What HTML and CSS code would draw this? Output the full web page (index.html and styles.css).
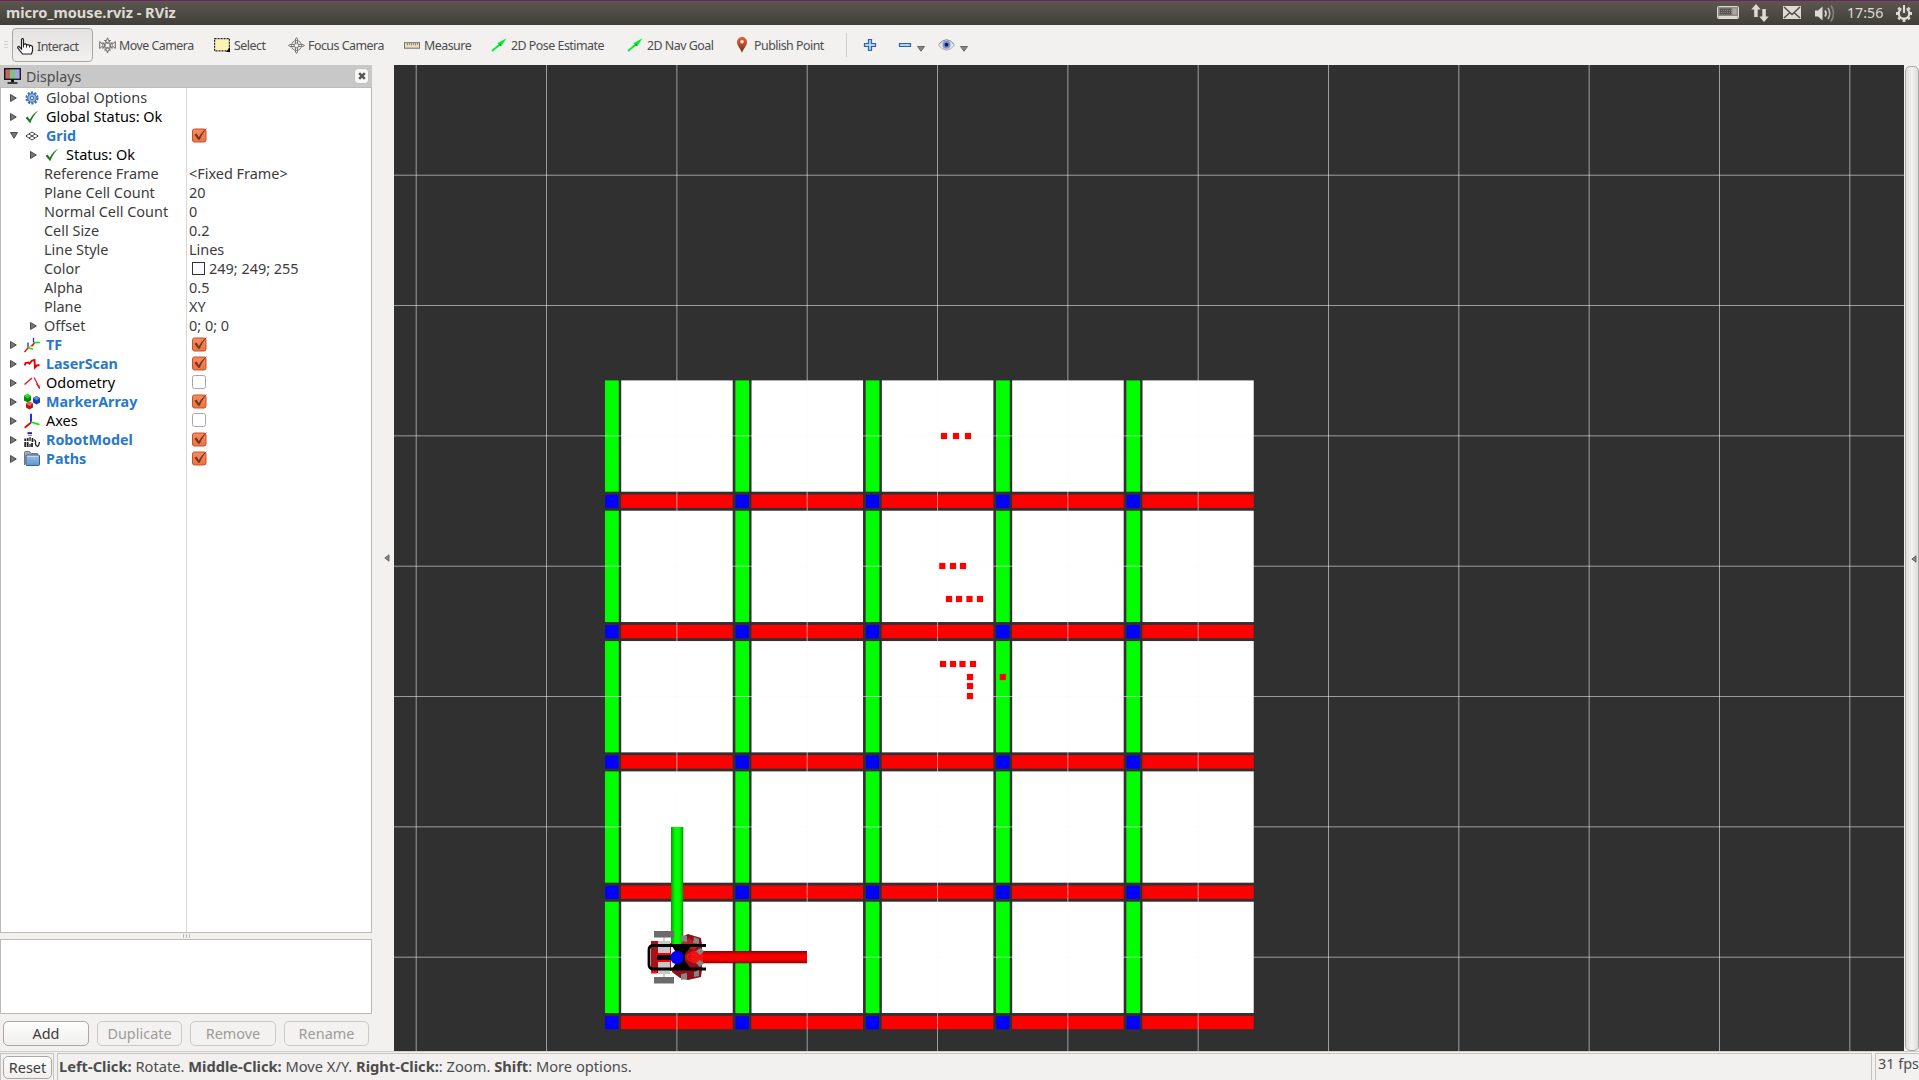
FILE: index.html
```html
<!DOCTYPE html>
<html lang="en">
<head>
<meta charset="utf-8">
<title>micro_mouse.rviz - RViz</title>
<link rel="stylesheet" href="styles.css">
</head>
<body>
<svg class="defs" width="0" height="0">
  <defs>
    <linearGradient id="check-fill" x1="0" y1="0" x2="0" y2="1"><stop offset="0" stop-color="#f88a5e"/><stop offset="1" stop-color="#ee7440"/></linearGradient>
    <linearGradient id="folder-fill" x1="0" y1="0" x2="0" y2="1"><stop offset="0" stop-color="#9dbfe4"/><stop offset="1" stop-color="#5f93cc"/></linearGradient>
    <linearGradient id="pin-fill" x1="0" y1="0" x2="0" y2="1"><stop offset="0" stop-color="#ee5a35"/><stop offset=".5" stop-color="#b54a2c"/><stop offset="1" stop-color="#4a2b18"/></linearGradient>
    <linearGradient id="green-axis"><stop offset="0" stop-color="#089008"/><stop offset=".15" stop-color="#00cc00"/><stop offset=".35" stop-color="#0f0"/><stop offset=".65" stop-color="#0f0"/><stop offset=".85" stop-color="#00cc00"/><stop offset="1" stop-color="#089008"/></linearGradient>
    <linearGradient id="red-axis" x1="0" y1="0" x2="0" y2="1"><stop offset="0" stop-color="#8a0000"/><stop offset=".15" stop-color="#c80000"/><stop offset=".35" stop-color="#f80000"/><stop offset=".65" stop-color="#f80000"/><stop offset=".85" stop-color="#c80000"/><stop offset="1" stop-color="#8a0000"/></linearGradient>
    <symbol id="arrow-right" viewBox="0 0 7 8"><path d="M.5.5 6.300 4 .5 7.500z" fill="#777" stroke="#4c4c4c"/></symbol>
    <symbol id="arrow-down" viewBox="0 0 8 7"><path d="M.5.5h7L4 6.300z" fill="#777" stroke="#4c4c4c"/></symbol>
    <symbol id="menu-arrow" viewBox="0 0 8 6"><path d="M.5.5h7L4 5.200z" fill="#888" stroke="#666"/></symbol>
    <symbol id="status-ok" viewBox="0 0 14 14"><path d="M.6 8 2.500 6.400 4.800 9.600C7 5.500 9.500 2.700 13.400.6 9.800 4 7.200 8 5.200 13.200z" fill="#1f7a1f"/></symbol>
    <symbol id="checked" viewBox="0 0 17 16"><rect x="1.500" y="2" width="13.500" height="13" rx="2" fill="url(#check-fill)" stroke="#bd5430"/><path d="M3.500 7.700 5.500 6.500l2.300 3.800C10 6.500 12.500 3 16.500.8 13 4.500 10.500 8.500 8.800 12.800H7.200z" fill="#6b3825"/></symbol>
    <symbol id="unchecked" viewBox="0 0 17 16"><rect x="1.500" y="1.500" width="13" height="13" rx="2" fill="#fff" stroke="#a8a6a4"/></symbol>
    <symbol id="green-arrow" viewBox="0 0 16 14"><path d="m1.500 12.500 8-6.500" stroke="#00ef30" stroke-width="1.900" stroke-linecap="round"/><path d="M6.300 5.200 15.500.3 10.200 8.300z" fill="#00ef30"/><path d="m8 7 2-1v2z" fill="#087a20"/></symbol>
  </defs>
</svg>

<header class="titlebar">
  <span class="window-title">micro_mouse.rviz - RViz</span>
  <svg class="tray" width="206" height="24" viewBox="1713 1 206 24" fill="none">
    <rect x="1717.500" y="6.500" width="21" height="12" rx="1" fill="#8e8b83" stroke="#dedad2"/>
    <rect x="1719.500" y="8.500" width="12" height="6" fill="#56544e"/><rect x="1732.500" y="8.500" width="4" height="6" fill="#a8a69d"/>
    <path d="M1719 10.500h17M1719 12.500h17" stroke="#a8a69d" stroke-width=".7" stroke-dasharray="1 1"/><path d="M1718.500 17h19" stroke="#dedad2" stroke-width="2"/>
    <path d="m1756 4 4.700 5.500h-3V17h-3.500V9.500h-3z" fill="#dfdbd2"/><path d="M1764 22l-4.700-5.500h3V9h3.500v7.500h3z" fill="#dfdbd2"/>
    <rect x="1783" y="6" width="18" height="13" fill="#dfdbd2"/><path d="m1784 7 8 7.500 8-7.500M1784 18l5.500-5M1800 18l-5.500-5" stroke="#4b4a44" stroke-width="1.400"/>
    <path d="M1815 10.500h3l4.500-4v14l-4.500-4h-3z" fill="#dfdbd2"/>
    <path d="M1825 10.500q2 3 0 6" stroke="#dfdbd2" stroke-width="1.700"/><path d="M1828 8q3.600 5.500 0 11" stroke="#bbb8af" stroke-width="1.700"/><path d="M1831 5.500q5 8 0 16" stroke="#85827a" stroke-width="1.700"/>
    <circle cx="1904" cy="13.500" r="5.200" stroke="#dfdbd2" stroke-width="2.200"/>
    <path d="M1904 19v3M1896 13.500h2M1910 13.500h2M1898.300 7.800l1.600 1.600M1909.700 7.800l-1.600 1.600M1898.300 19.200l1.600-1.600M1909.700 19.200l-1.600-1.600" stroke="#dfdbd2" stroke-width="2.800"/>
    <path d="M1904 4v9" stroke="#4b4a44" stroke-width="5"/><path d="M1904 5v8" stroke="#dfdbd2" stroke-width="2.200"/>
  </svg>
  <span class="clock">17:56</span>
</header>

<nav class="toolbar">
  <svg class="grip" width="4" height="10"><path d="M0 1.500h4M0 4.500h4M0 7.500h4" stroke="#d0cfcd"/></svg>
  <button class="tool interact">
    <svg width="17" height="17" viewBox="0 0 17 17"><path d="M4.500 11V2q0-1.500 1-1.500t1 1.500v4.500q2.500-1.500 3 .5 2-1 3 .5 2.500-.5 3 1.500v4l-1 3h-9L.8 10Q.5 8 2 8.500z" fill="#fff" stroke="#222" stroke-width="1.200"/><path d="M6.500 6v3.500M9.500 7v2.500M12.500 7.500v2" stroke="#222" fill="none"/></svg>
    <span>Interact</span>
  </button>
  <button class="tool move">
    <svg width="17" height="17" viewBox="0 0 17 17" fill="none" stroke="#666" stroke-width="1"><path d="m8.500 6-3-2.500h2L8.500.8l1 2.700h2zM8.500 10.500 5.500 13h2l1 3 1-3h2zM6 8.500 4 5.500v2L.7 4.500v7L4 8.700v2.800zM11 8.500l2-3v2l3.300-3v7L13 8.700v2.800z"/><rect x="6" y="6" width="5" height="5"/></svg>
    <span>Move Camera</span>
  </button>
  <button class="tool select">
    <svg width="16" height="14" viewBox="0 0 16 14"><rect x=".6" y=".6" width="14.800" height="12.300" fill="#fbf3b6" stroke="#222" stroke-width="1.200" stroke-dasharray="2 1"/><path d="M16 9v5h-4z"/></svg>
    <span>Select</span>
  </button>
  <button class="tool focus">
    <svg width="17" height="17" viewBox="0 0 17 17" fill="none" stroke="#777"><circle cx="8.500" cy="8.500" r="5"/><circle cx="8.500" cy="8.500" r="2.300"/><path d="M7.500 6V2L8.500.5l1 1.500v4M7.500 11v4l1 1.500 1-1.500v-4M6 7.500H2l-1.500 1L2 9.500h4M11 7.500h4l1.500 1-1.500 1h-4"/></svg>
    <span>Focus Camera</span>
  </button>
  <button class="tool measure">
    <svg width="16" height="7" viewBox="0 0 16 7"><rect x=".5" y=".7" width="15" height="5.500" fill="#e9deb4" stroke="#77736a"/><path d="M3.500 1v2.500M5.500 1v2M7.500 1v2.500M9.500 1v2M11.500 1v2.500M13.500 1v2" stroke="#777" stroke-width=".8"/></svg>
    <span>Measure</span>
  </button>
  <button class="tool pose"><svg width="16" height="14"><use href="#green-arrow"/></svg><span>2D Pose Estimate</span></button>
  <button class="tool nav"><svg width="16" height="14"><use href="#green-arrow"/></svg><span>2D Nav Goal</span></button>
  <button class="tool publish">
    <svg width="14" height="16" viewBox="0 0 14 16"><path d="M7 15.800C5.500 11.500 2 9 2 5a5 5 0 0 1 10 0c0 4-3.500 6.500-5 10.800z" fill="url(#pin-fill)"/><circle cx="7" cy="4.800" r="1.800" fill="#fbe6df"/></svg>
    <span>Publish Point</span>
  </button>
  <span class="separator"></span>
  <svg class="plus" width="14" height="14" viewBox="0 0 14 14"><path d="M5.500 1.500h3v4h4v3h-4v4h-3v-4h-4v-3h4z" fill="#b2d0f0" stroke="#2e64a3" stroke-width="1.200"/></svg>
  <svg class="minus" width="14" height="6" viewBox="0 0 14 6"><path d="M1.500 1.500h11v3h-11z" fill="#b2d0f0" stroke="#2e64a3" stroke-width="1.200"/></svg>
  <svg class="drop" width="8" height="6"><use href="#menu-arrow"/></svg>
  <svg class="eye" width="17" height="12" viewBox="0 0 17 12"><path d="M.5 6Q4 1 8.500 1t8 5Q13 11 8.500 11T.5 6z" fill="#e8e8e6" stroke="#aaa"/><circle cx="8.500" cy="5.700" r="4" fill="#7b93d8"/><circle cx="8.500" cy="5.700" r="1.900" fill="#111b50"/><path d="M1 5Q4.500.7 8.500.7T16 5" fill="none" stroke="#999"/></svg>
  <svg class="drop" width="8" height="6"><use href="#menu-arrow"/></svg>
</nav>

<main class="workspace">
  <aside class="displays">
    <div class="dock-title">
      <svg width="17" height="17" viewBox="0 0 17 17"><path d="M1 1h5v10H1z" fill="#c46464"/><path d="M6 1h5v10H6z" fill="#7cc57c"/><path d="M11 1h5v10h-5z" fill="#a6a1ee"/><rect x=".7" y=".7" width="15.600" height="10.600" fill="none" stroke="#111" stroke-width="1.300"/><path d="M7 11.500h3V14H7zM3.500 14.200h10v1.500h-10z" fill="#111"/></svg>
      <span class="dock-name">Displays</span>
      <button class="close"><svg width="8" height="8"><path d="m1.200 1.200 5.600 5.600M6.800 1.200 1.200 6.800" stroke="#555" stroke-width="2.400"/></svg></button>
    </div>
    <div class="tree">
      <div class="row"><svg class="exp" width="7" height="8"><use href="#arrow-right"/></svg><span class="icon"><svg width="14" height="14" viewBox="0 0 14 14" fill="none"><circle cx="7" cy="7" r="5.600" stroke="#3f6ea9" stroke-width="2" stroke-dasharray="2.200 1.320"/><circle cx="7" cy="7" r="4.400" fill="#8fb3e2" stroke="#3f6eb0"/><circle cx="7" cy="7" r="1.700" fill="#dce8f8" stroke="#3f6eb0"/></svg></span><span class="name">Global Options</span></div>
      <div class="row status"><svg class="exp" width="7" height="8"><use href="#arrow-right"/></svg><span class="icon"><svg width="14" height="14"><use href="#status-ok"/></svg></span><span class="name">Global Status: Ok</span></div>
      <div class="row enabled"><svg class="exp" width="8" height="7"><use href="#arrow-down"/></svg><span class="icon"><svg width="14" height="10" viewBox="0 0 14 10" fill="none" stroke="#444"><path d="M.8 5 7 1l6.200 4L7 9zM4 3l6 4M10 3 4 7"/></svg></span><span class="name">Grid</span><svg class="box" width="17" height="16"><use href="#checked"/></svg></div>
      <div class="row status child"><svg class="exp" width="7" height="8"><use href="#arrow-right"/></svg><span class="icon"><svg width="14" height="14"><use href="#status-ok"/></svg></span><span class="name">Status: Ok</span></div>
      <div class="row prop"><span class="name">Reference Frame</span><span class="value">&lt;Fixed Frame&gt;</span></div>
      <div class="row prop"><span class="name">Plane Cell Count</span><span class="value">20</span></div>
      <div class="row prop"><span class="name">Normal Cell Count</span><span class="value">0</span></div>
      <div class="row prop"><span class="name">Cell Size</span><span class="value">0.2</span></div>
      <div class="row prop"><span class="name">Line Style</span><span class="value">Lines</span></div>
      <div class="row prop"><span class="name">Color</span><span class="value"><i class="swatch"></i>249; 249; 255</span></div>
      <div class="row prop"><span class="name">Alpha</span><span class="value">0.5</span></div>
      <div class="row prop"><span class="name">Plane</span><span class="value">XY</span></div>
      <div class="row prop offset"><svg class="exp" width="7" height="8"><use href="#arrow-right"/></svg><span class="name">Offset</span><span class="value">0; 0; 0</span></div>
      <div class="row enabled"><svg class="exp" width="7" height="8"><use href="#arrow-right"/></svg><span class="icon"><svg width="16" height="16" viewBox="0 0 16 16" fill="none" stroke-width="1.300"><path d="m4 11 6-5" stroke="#e6c63c"/><path d="M9.500 5.500V.8M4 10.500V5.500" stroke="#22f"/><path d="M10 5.500h6M4 11l5 1" stroke="#0e0"/><path d="m10.500 6-3 3.500M4 11l-3.500 4" stroke="#e00"/></svg></span><span class="name">TF</span><svg class="box" width="17" height="16"><use href="#checked"/></svg></div>
      <div class="row enabled"><svg class="exp" width="7" height="8"><use href="#arrow-right"/></svg><span class="icon"><svg width="16" height="12" viewBox="0 0 16 12"><path d="M.8 7.500 1.500 5 4.500 4.500 5.500 5.500 8 2.500l2.500-.5.500 7.500 2-2 2.500-.5" fill="none" stroke="#e80000" stroke-width="1.900"/></svg></span><span class="name">LaserScan</span><svg class="box" width="17" height="16"><use href="#checked"/></svg></div>
      <div class="row disabled"><svg class="exp" width="7" height="8"><use href="#arrow-right"/></svg><span class="icon"><svg width="16" height="14" viewBox="0 0 16 14" fill="none" stroke="#e02020"><path d="m.5 8.500 7.500-6.500" stroke-width="1.500"/><path d="m10 1.500 2.500 4.500 3 6.500" stroke-width="1.300"/><path d="m12 7.500 3.500 5-.3-3" fill="#e02020" stroke-width=".7"/></svg></span><span class="name">Odometry</span><svg class="box" width="17" height="16"><use href="#unchecked"/></svg></div>
      <div class="row enabled"><svg class="exp" width="7" height="8"><use href="#arrow-right"/></svg><span class="icon"><svg width="16" height="16" viewBox="0 0 16 16"><path d="M0 2 3.500 0 7 2v4.500l-3.500 2L0 6.500z" fill="#078a07"/><path d="M0 2 3.500 0 7 2 3.500 4.500z" fill="#1be51b"/><path d="m9 4 3.500-2L16 4v4.500l-3.500 2-3.500-2z" fill="#1638b0"/><path d="m9 4 3.500-2L16 4l-3.500 2.500z" fill="#5c82ee"/><path d="M2 9.500 5.500 7.500 9 9.500v4l-3.500 2-3.500-2z" fill="#b51c1c"/><path d="m2 9.500 3.500-2 3.500 2L5.500 12z" fill="#f06464"/></svg></span><span class="name">MarkerArray</span><svg class="box" width="17" height="16"><use href="#checked"/></svg></div>
      <div class="row disabled"><svg class="exp" width="7" height="8"><use href="#arrow-right"/></svg><span class="icon"><svg width="16" height="16" viewBox="0 0 16 16" stroke-width="1.800"><path d="M7 9.500V.8" stroke="#11e"/><path d="m7 9 8.500 2.700" stroke="#0e0"/><path d="M7 9.500.7 14.700" stroke="#e00"/></svg></span><span class="name">Axes</span><svg class="box" width="17" height="16"><use href="#unchecked"/></svg></div>
      <div class="row enabled"><svg class="exp" width="7" height="8"><use href="#arrow-right"/></svg><span class="icon"><svg width="16" height="16" viewBox="0 0 16 16" fill="none" stroke="#222"><path d="M3.500 1.200h4.500" stroke="#252580" stroke-width="2"/><path d="M4 3.500h4" stroke="#999"/><path d="M1.200 6.500v2.500M1.200 10V15M3.700 6v3M3.700 10v5M8.500 6v4M8 11v4" stroke-width="1.800"/><path d="M6 5v4M6 12v3M10.300 7.500q1.700 1 1.200 3.500t2 3.500q1.500-1 2-4.500" stroke-width="1.300"/></svg></span><span class="name">RobotModel</span><svg class="box" width="17" height="16"><use href="#checked"/></svg></div>
      <div class="row enabled"><svg class="exp" width="7" height="8"><use href="#arrow-right"/></svg><span class="icon"><svg width="16" height="15" viewBox="0 0 16 15"><path d="M.5 14V1.500Q.5.500 1.500.500h4l1.500 2h6.500V5" fill="#aaa9a7" stroke="#777"/><rect x="2" y="4" width="13.500" height="10.500" rx="1" fill="url(#folder-fill)" stroke="#305f98"/><path d="M3.300 5.300h11" stroke="#c9def4"/></svg></span><span class="name">Paths</span><svg class="box" width="17" height="16"><use href="#checked"/></svg></div>
    </div>
    <div class="splitter"><i></i><i></i><i></i></div>
    <div class="description"></div>
    <div class="actions">
      <button class="btn">Add</button><button class="btn off">Duplicate</button><button class="btn off">Remove</button><button class="btn off">Rename</button>
    </div>
  </aside>
  <div class="collapse-left"><svg width="6" height="8"><path d="M5 .8v6.400L.8 4z" fill="#888" stroke="#555" stroke-width=".8"/></svg></div>
  <svg class="scene" width="1510" height="986" viewBox="394 65 1510 986">
    <g id="cells"></g>
    <g id="grid-lines" stroke="#f9f9ff" stroke-opacity=".55"></g>
    <g id="scan" fill="#f00"></g>
    <rect x="671" y="827" width="12.300" height="125" fill="url(#green-axis)"/>
    <rect x="690" y="951" width="117" height="12.300" fill="url(#red-axis)"/>
    <g class="robot">
      <path d="M664 937v40" stroke="#c9c3ac" stroke-width="1.500"/>
      <rect x="654" y="931" width="20" height="6.500" fill="#6b6b6b"/><rect x="654" y="977" width="20" height="6.500" fill="#6b6b6b"/>
      <path d="M682 937l6-3 13 4 1 7v9l-8 3 8 3v9l-1 8-13 3-8-2-8-6v-9h12v-18z" fill="#8d1118"/>
      <path d="M681 944l8-6 10 7-5 5z" fill="#b5222a"/>
      <rect x="651" y="941" width="7" height="32" fill="#a51218"/><rect x="651" y="970" width="6" height="3.500" fill="#e11"/>
      <rect x="658" y="941" width="12" height="33" fill="#c9c7c7"/><rect x="670" y="943" width="1.500" height="28" fill="#b01319"/>
      <path d="M671 946h5v23h-5z" fill="#fff"/>
      <path d="M657 953h14v3h-14zM657 959h14v3h-14z" fill="#f00"/><path d="M657 955h14v5h-14z" fill="#000"/>
      <path d="M672 946h19l-6 8v7l6 8h-19l5-8v-7z" fill="#000"/>
      <path d="M685 957q3-5 10-6.500h8v13h-8q-7-1.500-10-6.500z" fill="#f21212"/><path d="M690 953v9M686 957h4" fill="none" stroke="#a00" stroke-dasharray="1 1"/>
      <path d="M706 945.500h-54q-3 1-3 4v15.500q0 3 3 4h54" fill="none" stroke="#000" stroke-width="2.800"/>
      <path d="M681 935l6 1v6l-6-1zM694 937l5 2v5l-6-1zM681 974l6-1v6l-6 1zM694 972l5-2v6l-5 1zM696 951l4-3 4 3-4 4zM696 963l4-3 4 3-4 4z" fill="#858585"/>
      <circle cx="677" cy="957.500" r="6.700" fill="#00f"/>
    </g>
  </svg>
  <div class="right-dock"><svg width="6" height="8"><path d="M5 .8v6.400L.8 4z" fill="#888" stroke="#555" stroke-width=".8"/></svg></div>
</main>

<footer class="statusbar">
  <div class="cell reset-cell"><button class="btn reset">Reset</button></div>
  <div class="cell help"><span><b>Left-Click:</b> Rotate. <b>Middle-Click:</b> Move X/Y. <b>Right-Click:</b>: Zoom. <b>Shift</b>: More options.</span></div>
  <div class="cell fps"><span>31 fps</span></div>
</footer>
<script src="scene.js"></script>
</body>
</html>
```
FILE: styles.css
```css
* { box-sizing: border-box; }
body { margin: 0; width: 1919px; height: 1080px; overflow: hidden; display: flex; flex-direction: column; background: #f2f1f0; color: #3c3c3c; font: 14.45px/19px "Noto Sans", "Open Sans", sans-serif; }
button { font: inherit; color: inherit; letter-spacing: inherit; padding: 0; border: 0; background: none; }
svg { display: block; flex: none; }
span { white-space: nowrap; }
.defs { position: absolute; }

.titlebar { position: relative; height: 25px; flex: none; display: flex; align-items: center; justify-content: space-between; padding: 0 0 1px 6px; border-top: 1px solid #75215f; background: linear-gradient(#5b5850, #3f3e39); color: #dfdbd2; }
.window-title { font-weight: 700; font-size: 14.6px; }
.clock { position: absolute; left: 1847px; top: 2px; font-size: 14.2px; }

.toolbar { height: 40px; flex: none; display: flex; align-items: center; padding-left: 4px; font-size: 12.4px; letter-spacing: -.5px; color: #4c4c4c; }
.grip { margin-right: 4px; }
.tool { display: flex; align-items: center; gap: 4px; height: 34px; flex: none; }
.interact { width: 81px; gap: 3px; padding: 2px 0 0 4px; margin-right: 6px; border: 1px solid #a9a7a4; border-radius: 4px; background: linear-gradient(#e4e3e1, #f1f0ef); }
.move { width: 115px; gap: 3px; }
.select { width: 74px; }
.focus { width: 116px; gap: 3px; }
.measure { width: 87px; }
.pose { width: 136px; }
.nav { width: 108px; }
.publish { width: 111px; gap: 5px; }
.separator { width: 1px; height: 24px; background: #cfcdca; }
.plus { margin-left: 16px; }
.minus { margin-left: 21px; }
.drop { margin: 7px 0 0 5px; }
.eye { margin-left: 13px; }

.workspace { height: 986px; flex: none; display: flex; }
.displays { width: 372px; flex: none; display: flex; flex-direction: column; }
.dock-title { height: 22px; display: flex; align-items: center; padding: 0 4px 0 4px; background: #c8c8c8; color: #4c4c4c; }
.dock-name { margin-left: 5px; flex: 1; font-size: 14.2px; }
.close { width: 13px; height: 14px; display: grid; place-items: center; border-radius: 3px; background: #f7f7f6; box-shadow: 0 0 1px #888; }
.tree { height: 846px; border: 1px solid #bdbab5; background: linear-gradient(90deg, transparent 185px, #d9d7d5 185px, #d9d7d5 186px, transparent 186px) #fff; }
.row { height: 19px; display: grid; grid-template-columns: 22px 23px 141px 1fr; align-items: center; }
.exp { justify-self: start; margin-left: 9px; }
.icon { width: 16px; height: 16px; display: grid; place-items: center; margin-left: 1px; }
.name { grid-column: 3; }
.value, .box { grid-column: 4; }
.value { display: flex; align-items: center; padding-left: 2px; }
.box { margin-left: 4px; margin-top: -2px; }
.status, .disabled { color: #000; }
.enabled .name { color: #2878c8; font-weight: 700; font-size: 14.3px; }
.child { grid-template-columns: 42px 23px 121px 1fr; }
.child .exp { margin-left: 29px; }
.prop { grid-template-columns: 43px 143px 1fr; }
.prop .name { grid-column: 2; }
.prop .value { grid-column: 3; }
.offset .exp { margin-left: 29px; }
.swatch { width: 13px; height: 13px; margin: 0 4px 0 3px; border: 1px solid #333; background: #f9f9ff; }
.splitter { height: 6px; display: flex; gap: 2px; justify-content: center; align-items: center; }
.splitter i { width: 1px; height: 4px; background: #bbb; }
.description { height: 75px; border: 1px solid #bdbab5; background: #fff; }
.actions { display: grid; grid-template-columns: 86px 85px 86px 85px; gap: 8px; padding: 7px 3px 0; }
.btn { height: 25px; border: 1px solid #aaa7a3; border-radius: 5px; background: linear-gradient(#fdfdfd, #f0efee); color: #3c3c3c; }
.off { border-color: #cbc9c6; color: #9d9b99; background: #f3f2f1; }
.collapse-left { width: 22px; flex: none; display: flex; align-items: center; padding: 0 0 0 12px; }
.scene { background: #303030; }
.right-dock { flex: 1; margin: 1px 0 0 1px; border: 1px solid #aaa8a5; border-radius: 5px; background: linear-gradient(90deg, #dedddb, #f3f2f1 50%, #dddcda); display: flex; align-items: center; padding-left: 5px; overflow: hidden; }

.statusbar { flex: 1; display: flex; gap: 3px; padding: 1px 0 1px; border-top: 1px solid #cfcdca; color: #4c4c4c; }
.cell { border: 1px solid #c6c4c1; display: flex; align-items: center; }
.reset-cell { width: 54px; padding: 0 0 1px 2px; }
.reset { width: 49px; height: 23px; }
.help { width: 1815px; padding: 0 0 2px 1px; font-size: 14.67px; }
.fps { flex: 1; border-right: 0; padding: 0 0 8px 2px; }
```
FILE: scene.js
```js
const NS = "http://www.w3.org/2000/svg";
const STEP = 130.33;

function add(parent, tag, attrs) {
  const el = document.createElementNS(NS, tag);
  for (const key in attrs) el.setAttribute(key, attrs[key]);
  parent.appendChild(el);
}

function rect(parent, x, y, width, height, fill) {
  add(parent, "rect", { x, y, width, height, fill });
}

// Maze: 5 x 5 cells, posts in blue, walls in green and red.
const cells = document.getElementById("cells");
for (let r = 0; r < 5; r++) {
  for (let c = 0; c < 5; c++) {
    const x = 605 + c * STEP;
    const y = 380.4 + r * STEP;
    rect(cells, x + 16.2, y, c === 4 ? 111.2 : 111.5, 111.3, "#fff");
    rect(cells, x, y, 13.8, 111.3, "#0f0");
    rect(cells, x + 16, y + 114.1, c === 4 ? 111.4 : 111.7, 13.4, "#f00");
    rect(cells, x + 0.2, y + 114.5, 13.2, 13, "#00f");
  }
}

// Reference grid.
const lines = document.getElementById("grid-lines");
for (let i = 0; i < 12; i++) {
  const x = 416.2 + i * STEP;
  add(lines, "line", { x1: x, x2: x, y1: 65, y2: 1051 });
}
for (let i = 0; i < 7; i++) {
  const y = 175.2 + i * STEP;
  add(lines, "line", { x1: 394, x2: 1904, y1: y, y2: y });
}

// Laser returns.
const scan = document.getElementById("scan");
[
  [944, 436], [956, 436], [968, 436],
  [942.3, 566], [953, 566], [963, 566],
  [949, 599], [959, 599], [969.5, 599], [980, 599],
  [943, 664], [953, 664], [962.5, 664], [973, 664],
  [970, 677], [970, 686], [970, 696],
  [1002.8, 677],
].forEach(([x, y]) => rect(scan, x - 3.1, y - 3.1, 6.2, 6.2, "#f00"));
```
